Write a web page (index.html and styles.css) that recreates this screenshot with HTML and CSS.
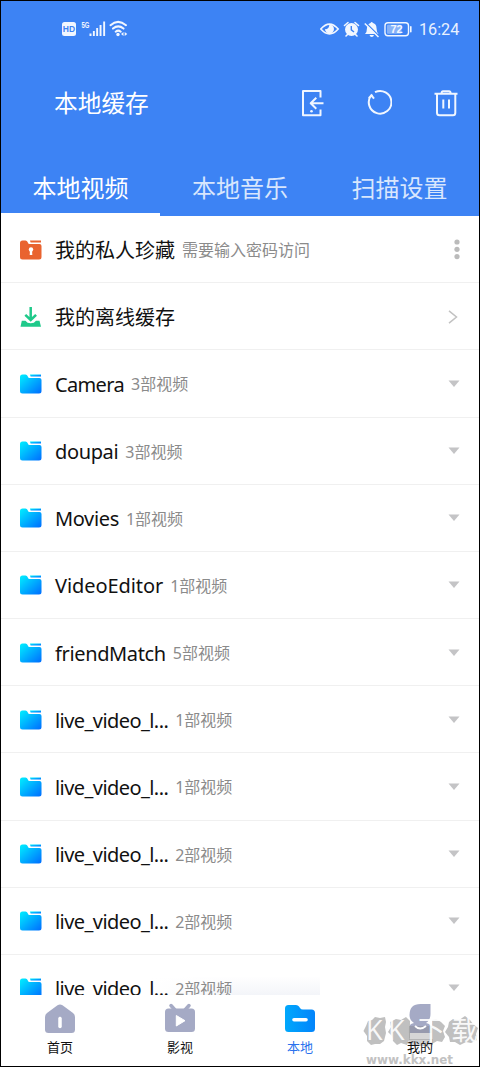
FILE: index.html
```html
<!DOCTYPE html>
<html lang="zh-CN">
<head>
<meta charset="utf-8">
<title>本地缓存</title>
<link rel="stylesheet" href="styles.css">
</head>
<body>
<svg class="defs" width="0" height="0" aria-hidden="true">
  <defs>
    <linearGradient id="blue" x1="0" y1="0" x2="1" y2="1"><stop offset="0" stop-color="#00f0ff"/><stop offset="1" stop-color="#006cff"/></linearGradient>
    <linearGradient id="nav-blue" x1="0" y1="0" x2="1" y2="0"><stop offset="0" stop-color="#00a8fc"/><stop offset="1" stop-color="#0384fb"/></linearGradient>
    <symbol id="folder" viewBox="0 0 22 20">
      <path d="M0 3Q0 .5 2.500 .5H5.500Q7 .5 7.600 2L8 3Q8.400 4 9.500 4H19.500Q21.500 4 21.500 6V17Q21.500 19.500 19 19.500H2.500Q0 19.500 0 17Z"/>
      <path d="M10 .6H21V2.400H10.600Z"/>
    </symbol>
    <symbol id="caret" viewBox="0 0 12 8"><path d="M.5 .5H11.500L6 7Z" fill="#c4c4c6"/></symbol>
  </defs>
</svg>
<div class="phone">
  <header class="header">
    <div class="status">
      <svg class="status-left" width="66" height="18" viewBox="0 0 66 18" fill="#f2f7ff">
        <rect x="0" y="2" width="14" height="14" rx="2.500"/>
        <text x="7" y="12.300" class="hd">HD</text>
        <text x="19.500" y="7.800" class="fiveg" textLength="8" lengthAdjust="spacingAndGlyphs">5G</text>
        <path d="M27.500 13.500H29.500V16H27.500ZM30.900 11H32.800V16H30.900ZM34.200 8H36.100V16H34.200ZM37.600 5H39.500V16H37.600ZM41.200 1.500H43.100V16H41.200Z"/>
        <g fill="none" stroke="#f2f7ff" stroke-width="2" stroke-linecap="round"><path d="M48.500 5.200Q56 -1.500 64 5.200M51 8.600Q56.200 4.200 61.500 8.600M53.700 11.700Q56.200 9.600 58.700 11.700"/></g>
        <circle cx="56" cy="14.500" r="1.700"/><path d="M61.500 12V16L59 14ZM62.700 12V16L65.300 14Z"/>
      </svg>
      <div class="status-right">
        <svg width="92" height="18" viewBox="0 0 92 18" fill="#f2f7ff">
          <path d="M.8 9Q9.500 -.8 18.200 9Q9.500 18.800 .8 9Z" fill="none" stroke="#f2f7ff" stroke-width="1.600"/>
          <path d="M9.500 4.500A4.500 4.500 0 1 1 5 9Q8.500 10 9.500 4.500Z"/>
          <circle cx="31.500" cy="9.500" r="6.500"/>
          <path d="M24.500 5.500 28 2.500M38.500 5.500 35 2.500M27.500 14.500 26 16M35.500 14.500 37 16" stroke="#f2f7ff" stroke-width="1.600" stroke-linecap="round"/>
          <path d="M31.300 6V9.800L34 12" fill="none" stroke="#3d83f4" stroke-width="1.400"/>
          <path d="M45 14Q47 12 47 8Q47.300 4 50.500 3Q51.500 1 53 3Q56.500 4 56.500 8Q56.500 12 58.500 14ZM49.500 15H54Q53.500 17 51.800 17Q50 17 49.500 15Z"/>
          <path d="M45.500 2.500 60 17" stroke="#3d83f4" stroke-width="1.500"/><path d="M44.800 3.500 58.500 17" stroke="#f2f7ff" stroke-width="1.500"/>
          <rect x="65" y="2.800" width="23.500" height="13" rx="3" fill="none" stroke="#f2f7ff" stroke-width="1.400"/>
          <rect x="67" y="4.800" width="14.500" height="9" rx="1" opacity=".4"/>
          <rect x="90" y="6" width="1.600" height="6.500" rx=".8"/>
          <text x="76.500" y="13.200" class="battery">72</text>
        </svg>
        <span class="clock">16:24</span>
      </div>
    </div>
    <div class="titlebar">
      <h1>本地缓存</h1>
      <div class="tools">
        <svg width="26" height="30" viewBox="0 0 26 30"><path d="M21.500 9.500V3H4V27.200H21.500V21.500M24.500 15.200H12M17.300 9.700 11.700 15.200 17.300 20.700"/><circle cx="12.500" cy="23.300" r="1.300" class="dot"/></svg>
        <svg width="26" height="30" viewBox="0 0 26 30"><path d="M9 4.200A11.300 11.300 0 1 1 5.300 7.200L8 10.700M2.800 10.300 6.300 6.500"/></svg>
        <svg width="26" height="30" viewBox="0 0 26 30"><path d="M1.500 5.800H24.500M8.500 5.500Q8.700 3.200 10 3.200H16Q17.500 3.200 17.700 5.500M4 6.500V24.700Q4 27.200 6.500 27.200H20Q22.300 27.200 22.300 24.700V6.500M10.300 11.500V20.500M16 11.500V20.500"/></svg>
      </div>
    </div>
    <nav class="tabs">
      <a class="tab active">本地视频</a>
      <a class="tab">本地音乐</a>
      <a class="tab">扫描设置</a>
    </nav>
  </header>
  <main class="list">
    <div class="shade"></div>
    <div class="row">
      <svg class="icon" fill="#e9632f"><use href="#folder"/><circle cx="11" cy="9.500" r="2.200" fill="#fff"/><path d="M10 10H12L12.300 15H9.700Z" fill="#fff"/></svg>
      <span class="name">我的私人珍藏</span><span class="note">需要输入密码访问</span>
      <svg class="more" width="6" height="21" viewBox="0 0 6 21" fill="#bbb"><circle cx="3" cy="3" r="2.600"/><circle cx="3" cy="10.300" r="2.600"/><circle cx="3" cy="17.600" r="2.600"/></svg>
    </div>
    <div class="row">
      <svg class="icon" fill="#1fc98a"><path d="M1.800 14.500H5.500Q7 17 10.700 17T16 14.500H19.500L21 20.500H.5Z" transform="translate(0 -.7)"/><path d="M10.700 0V12.800M5.300 7.800 10.700 13 16.100 7.800" fill="none" stroke="#1fc98a" stroke-width="2.500"/></svg>
      <span class="name">我的离线缓存</span>
      <svg class="chevron" width="10" height="14" viewBox="0 0 10 14"><path d="M1 .8 8.500 7 1 13.200" fill="none" stroke="#c2c2c2" stroke-width="1.500"/></svg>
    </div>
    <div class="row"><svg class="icon" fill="url(#blue)"><use href="#folder"/></svg><span class="name camera">Camera</span><span class="note">3部视频</span><svg class="caret"><use href="#caret"/></svg></div>
    <div class="row"><svg class="icon" fill="url(#blue)"><use href="#folder"/></svg><span class="name doupai">doupai</span><span class="note">3部视频</span><svg class="caret"><use href="#caret"/></svg></div>
    <div class="row"><svg class="icon" fill="url(#blue)"><use href="#folder"/></svg><span class="name movies">Movies</span><span class="note">1部视频</span><svg class="caret"><use href="#caret"/></svg></div>
    <div class="row"><svg class="icon" fill="url(#blue)"><use href="#folder"/></svg><span class="name editor">VideoEditor</span><span class="note">1部视频</span><svg class="caret"><use href="#caret"/></svg></div>
    <div class="row"><svg class="icon" fill="url(#blue)"><use href="#folder"/></svg><span class="name friend">friendMatch</span><span class="note">5部视频</span><svg class="caret"><use href="#caret"/></svg></div>
    <div class="row"><svg class="icon" fill="url(#blue)"><use href="#folder"/></svg><span class="name live">live_video_l...</span><span class="note">1部视频</span><svg class="caret"><use href="#caret"/></svg></div>
    <div class="row"><svg class="icon" fill="url(#blue)"><use href="#folder"/></svg><span class="name live">live_video_l...</span><span class="note">1部视频</span><svg class="caret"><use href="#caret"/></svg></div>
    <div class="row"><svg class="icon" fill="url(#blue)"><use href="#folder"/></svg><span class="name live">live_video_l...</span><span class="note">2部视频</span><svg class="caret"><use href="#caret"/></svg></div>
    <div class="row"><svg class="icon" fill="url(#blue)"><use href="#folder"/></svg><span class="name live">live_video_l...</span><span class="note">2部视频</span><svg class="caret"><use href="#caret"/></svg></div>
    <div class="row"><svg class="icon" fill="url(#blue)"><use href="#folder"/></svg><span class="name live">live_video_l...</span><span class="note">2部视频</span><svg class="caret"><use href="#caret"/></svg></div>
  </main>
  <footer class="bottom">
    <a class="item"><svg width="30" height="32" viewBox="0 0 30 32"><path d="M12.500 2.200Q15 .6 17.500 2.200L28 10Q30 11.500 30 14V26.500Q30 30 26.500 30H3.500Q0 30 0 26.500V14Q0 11.500 2 10Z" fill="#a5aac5"/><path d="M15 15.500V23.500" stroke="#fff" stroke-width="3.500" stroke-linecap="round"/></svg><span>首页</span></a>
    <a class="item"><svg width="30" height="32" viewBox="0 0 30 32"><path d="M6 2.500 10 7M24 2.500 20 7" stroke="#a5aac5" stroke-width="3.500" stroke-linecap="round"/><rect y="5.500" width="30" height="23.500" rx="3.500" fill="#a5aac5"/><path d="M11.300 12.500V23L20 17.700Z" fill="#fff" stroke="#fff" stroke-linejoin="round"/></svg><span>影视</span></a>
    <a class="item on"><svg width="30" height="32" viewBox="0 0 30 32"><path d="M0 5.500Q0 2 3.500 2H11Q13 2 14 3.500L15 5Q16 6.500 18 6.500H26.500Q30 6.500 30 10V25.500Q30 29 26.500 29H3.500Q0 29 0 25.500Z" fill="url(#nav-blue)"/><path d="M9 16.800H21" stroke="#fff" stroke-width="3.600" stroke-linecap="round"/></svg><span>本地</span></a>
    <a class="item"><svg width="30" height="32" viewBox="0 0 30 32"><path d="M4.500 12Q4.500 1 15.500 1H25.500V11Q25.500 17 21 20Q26.500 21 26.500 26V30H3.500V26Q3.500 21 9 20Q4.500 17 4.500 12Z" fill="#a5aac5"/></svg><span class="above">我的</span></a>
  </footer>
  <svg class="watermark" width="116" height="52" viewBox="0 0 116 52">
    <g fill="#bdbdbd" class="blobs">
      <path d="M5 7 9 6 12 3 17 4 22 3 23 8 22 13 23 19 21 27 17 30 12 30 8 31 4 27 4 22 .5 17 3 12Z"/>
      <path d="M27 8 33 5 38 6 43 3 47 7 47 24 44 31 38 29 34 31 30 27 29 22 25 18 28 13Z"/>
      <path d="M69 6 73 5 78 8 82 12 80 17 82 23 79 28 74 27 69 30Z"/>
      <path d="M86 8 90 5 96 6 102 2 107 6 110 10 115 14 113 20 114 26 108 29 103 28 97 31 92 28 87 28 86 23 82 18 85 13Z"/>
    </g>
    <path d="M46 25H70V31L63 32H53L46 30Z" fill="#777" opacity=".35"/>
    <path d="M46 12H69V26H46Z" fill="#777" opacity=".3"/>
    <g class="mark"><text x="3" y="26">K</text><text x="25" y="26">K</text><text x="55" y="26">下</text><text x="88" y="26">载</text></g>
    <path d="M52 12Q57 17 63 12" fill="none" stroke="#fff" stroke-width="1.800"/>
    <text x="3" y="49.500" class="site" textLength="87" lengthAdjust="spacingAndGlyphs">www.kkx.net</text>
  </svg>
</div>
</body>
</html>
```
FILE: styles.css
```css
* { box-sizing: border-box; }
body { margin: 0; background: #000; font-family: "Noto Sans", "Noto Sans CJK SC", sans-serif; }
.defs { display: block; height: 0; }
.phone { position: relative; width: 480px; height: 1067px; padding: 1px; background: #000; display: flex; flex-direction: column; overflow: hidden; }
.header { height: 215px; background: #3d83f4; color: #fff; display: flex; flex-direction: column; flex: none; }
.status { height: 56px; padding: 0 20px 0 61px; display: flex; justify-content: space-between; align-items: center; }
.status-left, .status-right svg { display: block; }
.status-right { display: flex; align-items: center; gap: 7px; }
.clock { font: 16.200px/20px Roboto, sans-serif; width: 40px; padding-top: 2px; color: #e9f2ff; }
.hd { font: bold 8.500px "Liberation Sans", sans-serif; text-anchor: middle; fill: #3d83f4; }
.fiveg { font: bold 9px "Liberation Sans", sans-serif; }
.battery { font: bold 11px "Liberation Sans", sans-serif; text-anchor: middle; }
.titlebar { height: 92px; padding: 0 20px 0 53px; display: flex; justify-content: space-between; align-items: center; }
h1 { margin: 0; font-size: 23.700px; font-weight: 400; line-height: 34px; }
.tools { display: flex; gap: 41px; }
.tools svg { display: block; fill: none; stroke: #f0f6ff; stroke-width: 2; stroke-linejoin: round; }
.tools .dot { fill: #f0f6ff; stroke: none; }
.tabs { flex: 1; display: grid; grid-template-columns: 159px 160px 159px; }
.tab { font-size: 24px; line-height: 34px; padding-top: 22px; text-align: center; color: #d8e6fd; }
.tab.active { color: #fff; border-bottom: 3px solid #fff; }
.list { position: relative; height: 779px; background: #fff; overflow: hidden; flex: none; }
.row { position: relative; height: 67.180px; padding: 1px 19px 0 19px; display: flex; align-items: center; border-bottom: 1px solid #f0f0f0; }
.icon { width: 22px; height: 20px; margin-right: 13px; flex: none; }
.name { padding-top: 2px; font-size: 20px; line-height: 30px; color: #111; white-space: nowrap; }
.note { padding-top: 1px; margin-left: 7px; font-size: 16px; line-height: 24px; color: #8b8b8b; white-space: nowrap; }
.camera { letter-spacing: -.65px; }
.doupai, .movies, .friend { letter-spacing: -.36px; }
.editor { letter-spacing: -.08px; }
.live { letter-spacing: -.57px; }
.caret { width: 12px; height: 8px; margin-left: auto; }
.more { margin-left: auto; }
.chevron { margin-left: auto; margin-right: 2px; }
.shade { position: absolute; left: 150px; top: 760px; width: 169px; height: 19px; background: linear-gradient(90deg, #fff, transparent 50%), linear-gradient(rgba(90, 110, 170, 0), rgba(90, 110, 170, .07)); }
.bottom { height: 71px; background: #fff; display: grid; grid-template-columns: 118px 122px 118px 122px; }
.item { display: flex; flex-direction: column; align-items: center; padding-top: 8px; color: #111; font-size: 13px; line-height: 20px; }
.item span { margin-top: 2px; }
.item .above { position: relative; z-index: 2; }
.item.on { color: #2a72ed; }
.watermark { position: absolute; z-index: 1; left: 363px; top: 1014px; }
.blobs { opacity: .95; }
.mark { font: 27px "Open Sans", "Noto Sans CJK SC", sans-serif; fill: #fff; opacity: .9; }
.site { font: bold 12px "DejaVu Sans", sans-serif; fill: #c2c2c2; }
```
